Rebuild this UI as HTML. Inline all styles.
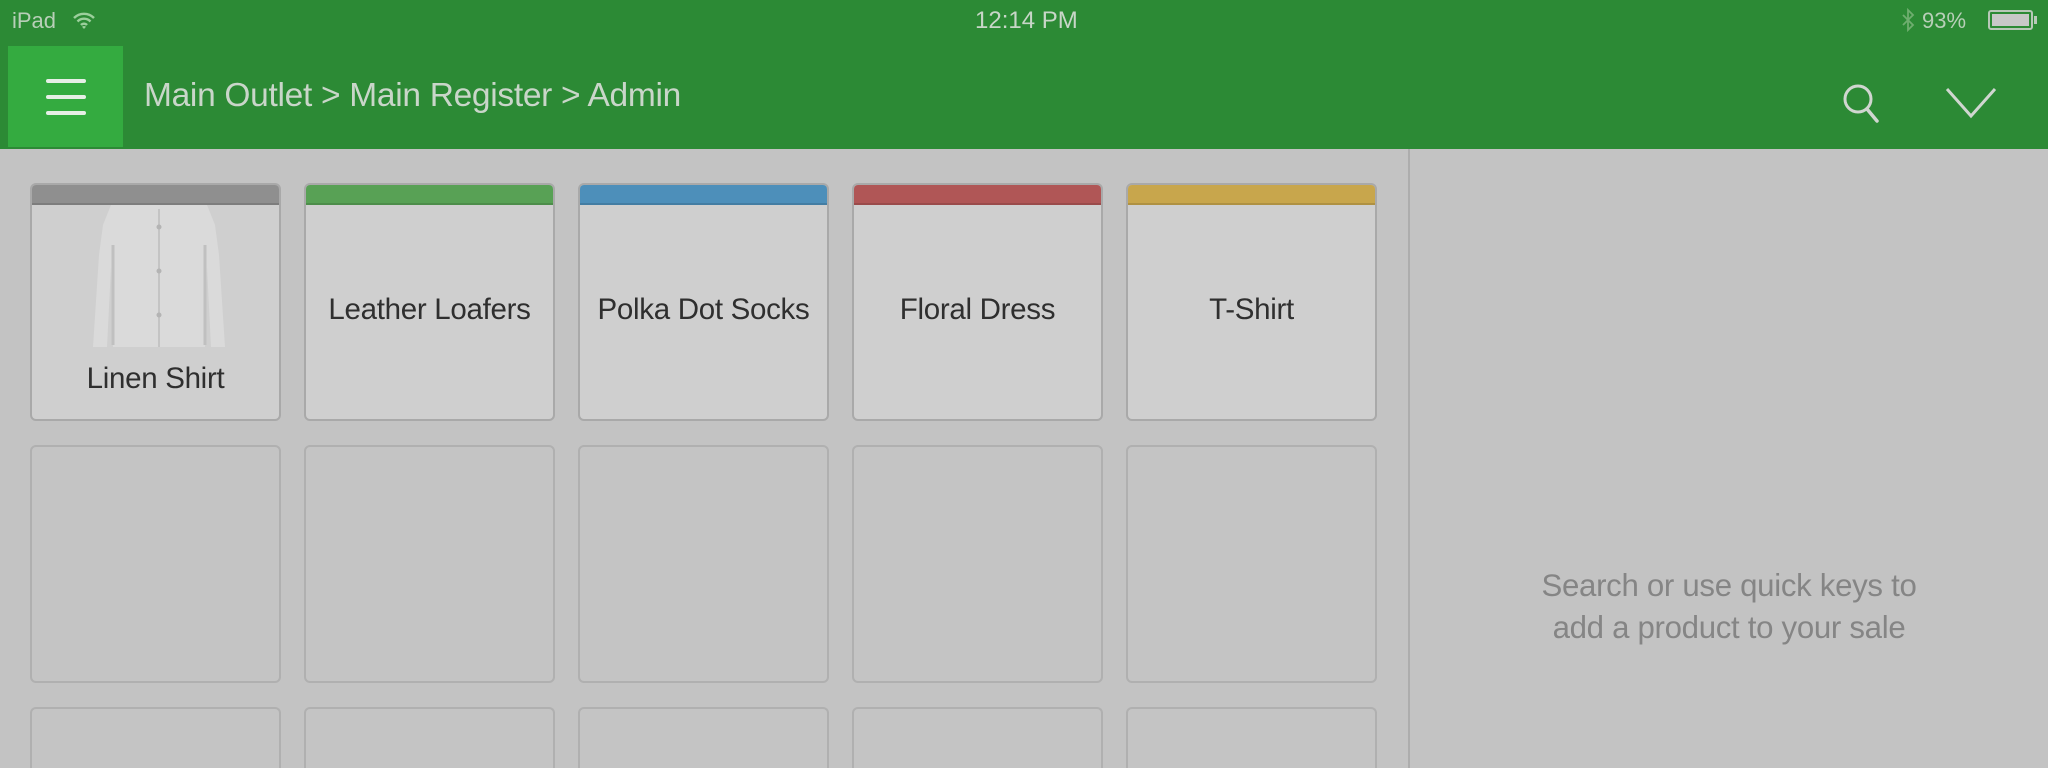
<!DOCTYPE html>
<html><head><meta charset="utf-8"><style>
*{margin:0;padding:0;box-sizing:border-box}
html,body{width:2048px;height:768px;overflow:hidden}
body{background:#c3c3c3;font-family:"Liberation Sans",sans-serif;position:relative}
#w{position:absolute;left:0;top:0;width:2048px;height:768px;overflow:hidden}
.hdr{position:absolute;left:0;top:0;width:2048px;height:149px;background:#2c8a35}
.sb{position:absolute;top:8px;font-size:22px;color:#b8cfb8}
.menu{position:absolute;left:8px;top:46px;width:115px;height:101px;background:#34ab40}
.menu i{position:absolute;left:38px;width:40px;height:4px;border-radius:2px;background:#e6efe6}
.crumb{position:absolute;left:144px;top:77px;font-size:33.5px;color:#c9d6c9;letter-spacing:-0.3px}
.div{position:absolute;left:1408px;top:149px;width:2px;height:619px;background:#adadad}
.tile{position:absolute;width:251px;height:238px;border:2px solid #a9a9a9;border-radius:6px;background:#cfcfcf;overflow:hidden}
.tile.e{background:#c4c4c4;border-color:#b0b0b0}
.tile.b{height:61px;border-bottom:none;border-radius:6px 6px 0 0}
.band{height:20px;border-bottom:2px solid rgba(0,0,0,.12)}
.lbl{position:absolute;left:0;right:0;text-align:center;font-size:29.5px;color:#2f2f2f;letter-spacing:-0.3px}
.msg{position:absolute;left:1410px;width:638px;top:565px;text-align:center;font-size:31.2px;line-height:42px;color:#858585;letter-spacing:-0.3px}
</style></head><body><div id="w">
<div class="hdr"></div>
<div class="sb" style="left:12px">iPad</div>
<svg style="position:absolute;left:72px;top:11px" width="24" height="20" viewBox="0 0 24 20"><path d="M2 7a14 14 0 0 1 20 0M5.5 10.5a9 9 0 0 1 13 0M9 14a4 4 0 0 1 6 0" stroke="#9ccf9c" stroke-width="2.4" fill="none"/><path d="M12 18l-2-2.2a3 3 0 0 1 4 0z" fill="#9ccf9c"/></svg>
<div class="sb" style="left:975px;font-size:24px;top:7px;color:#c8d6c8">12:14 PM</div>
<svg style="position:absolute;left:1900px;top:7px" width="16" height="28" viewBox="0 0 16 28"><path d="M3 8l10 10-5 5V3l5 5L3 18" stroke="#6fae6f" stroke-width="1.8" fill="none"/></svg>
<div class="sb" style="left:1922px">93%</div>
<div style="position:absolute;left:1988px;top:10px;width:45px;height:20px;border:2px solid #b8c8b8;border-radius:3px;padding:2px"><div style="width:37px;height:12px;background:#c8c8c8"></div></div>
<div style="position:absolute;left:2034px;top:16px;width:3px;height:8px;background:#b8c8b8"></div>
<div class="menu"><i style="top:33px"></i><i style="top:49px"></i><i style="top:65px"></i></div>
<div class="crumb">Main Outlet &gt; Main Register &gt; Admin</div>
<svg style="position:absolute;left:1840px;top:80px" width="46" height="46" viewBox="0 0 46 46"><circle cx="18" cy="19" r="13" stroke="#d0d6d0" stroke-width="3" fill="none"/><path d="M27 29l10 12" stroke="#d0d6d0" stroke-width="3.5" stroke-linecap="round"/></svg>
<svg style="position:absolute;left:1945px;top:86px" width="52" height="34" viewBox="0 0 52 34"><path d="M2 3l24 27L50 3" stroke="#d0d6d0" stroke-width="3" fill="none"/></svg>
<div class="div"></div>

<div class="tile" style="left:30px;top:183px"><div class="band" style="background:#8f8f8f"></div>
<svg style="position:absolute;left:49px;top:20px" width="156" height="142" viewBox="0 0 156 142"><path d="M30 0h96l8 20 4 30 6 92h-14l-4-80 -2 80H32l-2-80-4 80H12l6-92 4-30z" fill="#dadada"/><path d="M78 4v138" stroke="#c4c4c4" stroke-width="2"/><g fill="#b4b4b4"><circle cx="78" cy="22" r="2.5"/><circle cx="78" cy="66" r="2.5"/><circle cx="78" cy="110" r="2.5"/></g><path d="M32 40v100M124 40v100" stroke="#c0c0c0" stroke-width="3"/></svg>
<div class="lbl" style="top:177px">Linen Shirt</div></div>
<div class="tile" style="left:304px;top:183px"><div class="band" style="background:#58a155"></div><div class="lbl" style="top:108px">Leather Loafers</div></div>
<div class="tile" style="left:578px;top:183px"><div class="band" style="background:#4d8fba"></div><div class="lbl" style="top:108px">Polka Dot Socks</div></div>
<div class="tile" style="left:852px;top:183px"><div class="band" style="background:#b05656"></div><div class="lbl" style="top:108px">Floral Dress</div></div>
<div class="tile" style="left:1126px;top:183px"><div class="band" style="background:#c8a64c"></div><div class="lbl" style="top:108px">T-Shirt</div></div>

<div class="tile e" style="left:30px;top:445px"></div>
<div class="tile e" style="left:304px;top:445px"></div>
<div class="tile e" style="left:578px;top:445px"></div>
<div class="tile e" style="left:852px;top:445px"></div>
<div class="tile e" style="left:1126px;top:445px"></div>
<div class="tile e b" style="left:30px;top:707px"></div>
<div class="tile e b" style="left:304px;top:707px"></div>
<div class="tile e b" style="left:578px;top:707px"></div>
<div class="tile e b" style="left:852px;top:707px"></div>
<div class="tile e b" style="left:1126px;top:707px"></div>

<div class="msg">Search or use quick keys to<br>add a product to your sale</div>
</div></body></html>
